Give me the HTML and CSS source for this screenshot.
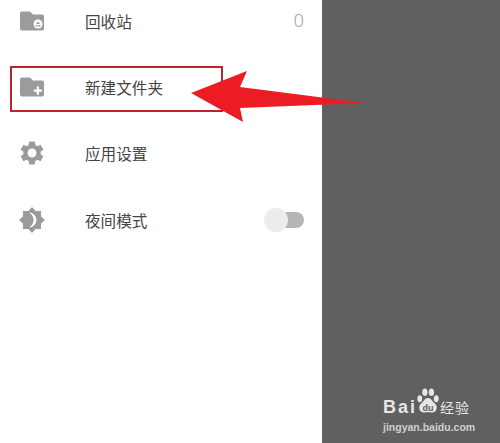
FILE: index.html
```html
<!DOCTYPE html>
<html lang="zh">
<head>
<meta charset="utf-8">
<title>菜单</title>
<link rel="stylesheet" href="styles.css">
</head>
<body>
<div class="screen">
  <nav class="drawer">
    <div class="row">
      <svg class="icon" viewBox="0 0 24 24"><path class="g" d="M2 2.500h8l3 3h9a2 2 0 0 1 2 2v12a2 2 0 0 1-2 2H2a2 2 0 0 1-2-2v-15a2 2 0 0 1 2-2z"/><circle class="w" cx="18" cy="15" r="4.500"/><path class="g" d="M18 12.300l2 2.700h-4zM15.300 16h2v1.800h-1zM20.700 16h-2.200v1.800h1.200z"/></svg>
      <span class="label">回收站</span>
      <span class="count">0</span>
    </div>
    <div class="row">
      <svg class="icon" viewBox="0 0 24 24"><path class="g" d="M2 2.500h8l3 3h9a2 2 0 0 1 2 2v12a2 2 0 0 1-2 2H2a2 2 0 0 1-2-2v-15a2 2 0 0 1 2-2z"/><path class="w" d="M16.800 11.500h2.200v3h3v2.200h-3v3h-2.200v-3h-3v-2.200h3z"/></svg>
      <span class="label">新建文件夹</span>
    </div>
    <div class="row">
      <svg class="icon" viewBox="2 2 20 20"><path class="g" d="M19.140 12.940c.04-.3.06-.61.06-.94 0-.32-.02-.64-.07-.94l2.030-1.580c.18-.14.23-.41.12-.61l-1.920-3.320c-.12-.22-.37-.29-.59-.22l-2.390.96c-.5-.38-1.030-.7-1.620-.94l-.36-2.540c-.04-.24-.24-.41-.48-.41h-3.840c-.24 0-.43.17-.47.41l-.36 2.540c-.59.24-1.130.57-1.620.94l-2.390-.96c-.22-.08-.47 0-.59.22L2.740 8.870c-.12.21-.08.47.12.61l2.030 1.580c-.05.3-.09.63-.09.94s.02.64.07.94l-2.030 1.580c-.18.14-.23.41-.12.61l1.920 3.320c.12.22.37.29.59.22l2.390-.96c.5.38 1.030.7 1.620.94l.36 2.540c.05.24.24.41.48.41h3.840c.24 0 .44-.17.47-.41l.36-2.540c.59-.24 1.130-.56 1.620-.94l2.390.96c.22.08.47 0 .59-.22l1.920-3.320c.12-.22.07-.47-.12-.61l-2.010-1.580z"/><circle class="w" cx="12" cy="12" r="3.700"/></svg>
      <span class="label">应用设置</span>
    </div>
    <div class="row">
      <svg class="icon" viewBox="0 0 24 24"><path class="g" d="M12 -1l3.600 3.900 5.400.1.100 5.400L25 12l-3.900 3.600-.1 5.400-5.400.1L12 25l-3.600-3.900-5.400-.1-.1-5.400L-1 12l3.900-3.600.1-5.400 5.400-.1z"/><path class="w" d="M9 4.500a7.500 7.500 0 0 1 0 15c3-2 4.500-4.500 4.500-7.500S12 6.500 9 4.500z"/></svg>
      <span class="label">夜间模式</span>
      <span class="switch"><span class="knob"></span></span>
    </div>
  </nav>
  <aside class="scrim">
    <div class="mark">
      <div class="mark-top">
        <span class="bai">Bai</span>
        <span class="paw-box">
          <svg class="paw" viewBox="0 0 32 38"><ellipse cx="4" cy="15" rx="3.500" ry="5"/><ellipse cx="11.500" cy="5.500" rx="3.800" ry="5.500"/><ellipse cx="21" cy="5.500" rx="3.800" ry="5.500"/><ellipse cx="28" cy="15" rx="3.500" ry="5"/><path d="M16 14c5 0 6 5 10 8 5 4 3 14-5 13-3-.5-7-.5-10 0-8 1-10-9-5-13 4-3 5-8 10-8z"/></svg>
          <span class="du">du</span>
        </span>
        <span class="jy">经验</span>
      </div>
      <div class="url">jingyan.baidu.com</div>
    </div>
  </aside>
  <div class="highlight"></div>
  <svg class="arrow" viewBox="0 0 500 443"><polygon points="191,93 247,71 240,87 365,103 240,108 243,122"/></svg>
</div>
</body>
</html>
```
FILE: styles.css
```css
* { box-sizing: border-box; }
html, body { margin: 0; padding: 0; }
body { background: #fff; font-family: "Roboto", "Noto Sans CJK SC", sans-serif; overflow: hidden; }
.screen { position: relative; display: flex; width: 500px; height: 443px; overflow: hidden; }
.drawer { width: 322px; flex: none; margin-top: -12.5px; background: #fff; }
.row { display: flex; align-items: center; height: 66.3px; padding: 0 19px 0 20px; }
.icon { width: 24px; height: 24px; flex: none; overflow: visible; }
.g { fill: #9b9b9b; }
.w { fill: #fff; }
.label { margin-left: 41px; font-size: 15.6px; color: #444; }
.count { margin-left: auto; margin-right: -1px; font-size: 19px; font-weight: 300; color: #a8a8a8; }
.switch { position: relative; width: 40px; height: 16px; margin-left: auto; margin-right: -1px; }
.switch::before { content: ""; position: absolute; left: 12px; right: 0; top: 0; bottom: 0; background: #b5b5b5; border-radius: 8px; }
.knob { position: absolute; left: 0; top: -4px; width: 24px; height: 24px; border-radius: 50%; background: #ececec; }
.scrim { flex: 1; position: relative; background: #606060; }
.mark { position: absolute; left: 61px; top: 388px; width: 92px; color: #e6e6e6; }
.mark-top { display: flex; align-items: flex-end; height: 28px; }
.bai { font: bold 18px/17px "Liberation Sans", sans-serif; letter-spacing: 2px; }
.paw-box { position: relative; flex: none; width: 22px; height: 28px; }
.paw { display: block; width: 22px; height: 27px; fill: #e6e6e6; }
.du { position: absolute; left: 0; right: 0; bottom: 2px; text-align: center; font: bold 9px/11px "Liberation Sans", sans-serif; color: #606060; }
.jy { margin-left: 1px; font: 14px/17px "Noto Sans CJK SC", sans-serif; letter-spacing: 1px; white-space: nowrap; }
.url { margin-top: 6px; font: bold 10.5px/11px "Liberation Sans", sans-serif; white-space: nowrap; color: #d0d0d0; }
.highlight { position: absolute; left: 10px; top: 66px; width: 213px; height: 46px; border: 2px solid #b8252c; }
.arrow { position: absolute; left: 0; top: 0; width: 500px; height: 443px; fill: #ec1c24; }
```
